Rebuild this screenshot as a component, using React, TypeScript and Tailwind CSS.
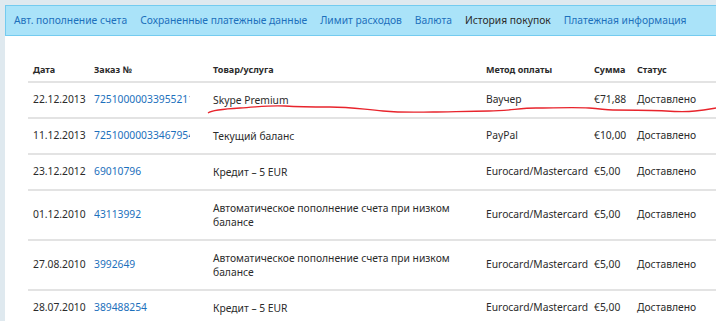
import React from 'react';

type Row = {
  date: string;
  order: string;
  item: string;
  method: string;
  sum: string;
  status: string;
};

const tabs = [
  { label: 'Авт. пополнение счета' },
  { label: 'Сохраненные платежные данные' },
  { label: 'Лимит расходов' },
  { label: 'Валюта' },
  { label: 'История покупок', active: true },
  { label: 'Платежная информация' },
];

const rows: Row[] = [
  { date: '22.12.2013', order: '72510000033955211', item: 'Skype Premium', method: 'Ваучер', sum: '€71,88', status: 'Доставлено' },
  { date: '11.12.2013', order: '72510000033467954', item: 'Текущий баланс', method: 'PayPal', sum: '€10,00', status: 'Доставлено' },
  { date: '23.12.2012', order: '69010796', item: 'Кредит – 5 EUR', method: 'Eurocard/Mastercard', sum: '€5,00', status: 'Доставлено' },
  { date: '01.12.2010', order: '43113992', item: 'Автоматическое пополнение счета при низком балансе', method: 'Eurocard/Mastercard', sum: '€5,00', status: 'Доставлено' },
  { date: '27.08.2010', order: '3992649', item: 'Автоматическое пополнение счета при низком балансе', method: 'Eurocard/Mastercard', sum: '€5,00', status: 'Доставлено' },
  { date: '28.07.2010', order: '389488254', item: 'Кредит – 5 EUR', method: 'Eurocard/Mastercard', sum: '€5,00', status: 'Доставлено' },
];

export default function App() {
  return (
    <div
      className="w-[716px] h-[321px] overflow-hidden bg-[#dfe9ef] pt-[5px] pl-[5px] text-[10.3px] text-[#2b2b2b]"
      style={{ fontFamily: '"Noto Sans", "Open Sans", sans-serif' }}
    >
      <div className="relative h-full bg-white">
        <nav className="flex h-[31px] items-center gap-[13px] border border-r-0 border-[#74cbef] bg-[#aae3f9] pl-[8px] whitespace-nowrap">
          {tabs.map(t => (
            <span key={t.label} className={t.active ? 'text-[#2b2b2b]' : 'text-[#1c70bc]'}>
              {t.label}
            </span>
          ))}
        </nav>

        <div className="pl-[23px] pt-[27px]">
          <table className="w-[688px] table-fixed border-collapse text-left">
            <colgroup>
              <col className="w-[66px]" />
              <col className="w-[119px]" />
              <col className="w-[273px]" />
              <col className="w-[108px]" />
              <col className="w-[43px]" />
              <col />
            </colgroup>
            <thead>
              <tr className="h-[19px] border-b-2 border-[#e3e3e3] text-[9px] font-bold text-[#2b2b2b]">
                <th className="pl-[5px] align-top">Дата</th>
                <th className="align-top">Заказ №</th>
                <th className="align-top">Товар/услуга</th>
                <th className="align-top">Метод оплаты</th>
                <th className="align-top">Сумма</th>
                <th className="align-top">Статус</th>
              </tr>
            </thead>
            <tbody>
              {rows.map((r, i) => (
                <tr
                  key={i}
                  className={`border-b-2 border-[#e3e3e3] ${r.item.length > 30 ? 'h-[50px]' : 'h-[36px]'}`}
                >
                  <td className="pl-[5px] align-middle">{r.date}</td>
                  <td className="align-middle">
                    <div className="w-[96px] overflow-hidden whitespace-nowrap text-[#1c70bc]">{r.order}</div>
                  </td>
                  <td className="pr-[30px] align-middle leading-[14px]">{r.item}</td>
                  <td className="align-middle whitespace-nowrap">{r.method}</td>
                  <td className="align-middle whitespace-nowrap">{r.sum}</td>
                  <td className="align-middle whitespace-nowrap">{r.status}</td>
                </tr>
              ))}
            </tbody>
          </table>
        </div>

        <svg
          className="pointer-events-none absolute left-[-5px] top-[-5px]"
          width="716"
          height="321"
          viewBox="0 0 716 321"
        >
          <path
            d="M208 113 C212 110 222 109 240 108 S270 105 285 106 S310 107 330 107 S360 109 383 111 S420 112 433 112 S470 111 489 111 S520 108 536 108 S575 107 589 108 S605 110 613 110 S650 110 666 111 S685 112 695 111 S710 109 716 108"
            fill="none"
            stroke="#e8242c"
            strokeWidth="1.3"
          />
        </svg>
      </div>
    </div>
  );
}
